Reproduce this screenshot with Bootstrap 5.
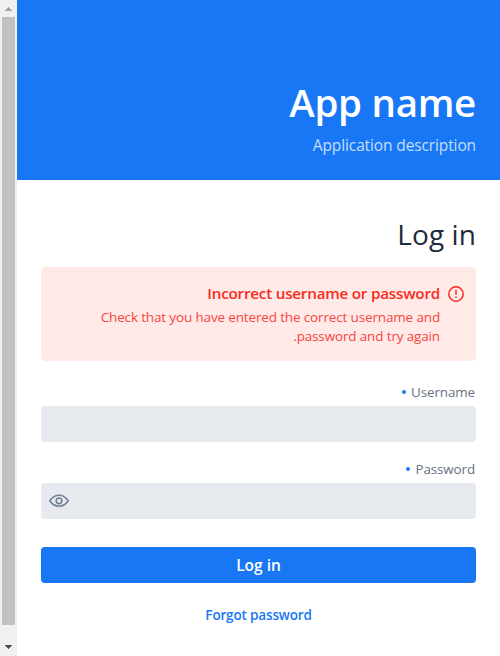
<!DOCTYPE html>
<html lang="en">
<head>
<meta charset="utf-8">
<meta name="viewport" content="width=device-width, initial-scale=1">
<title>Log in</title>
<link href="https://cdn.jsdelivr.net/npm/bootstrap@5.3.0/dist/css/bootstrap.min.css" rel="stylesheet">
<style>
body{font-family:"Segoe UI","Open Sans","Noto Sans",sans-serif;color:#1f2b3a}
.scroll-track{width:17px;background:#f0f0f0}
.scroll-thumb{width:13px;background:#c1c1c1;margin-bottom:14px}
.scroll-arrow{height:17px}
.hero{height:180px;background:#1877f5;padding:0 24px 24px}
.hero-title{font-size:38.5px;line-height:52px;font-weight:650;letter-spacing:-.3px}
.hero-text{font-size:15.5px;line-height:22px;margin-top:6px;color:#c6defd;letter-spacing:-.12px}
.login-area{padding:36px 24px 0}
.login-title{font-size:28px;line-height:36px;font-weight:400;margin-bottom:15px;letter-spacing:.1px}
.notice{background:#ffeae8;border-radius:4px;height:94px;padding:15px 12px 0;margin-bottom:21px;gap:8px}
.notice svg{margin-top:4px}
.notice-title{color:#f82a20;font-size:15.2px;line-height:22px;font-weight:600;letter-spacing:-.21px}
.notice-text{color:#f9453e;font-size:13.5px;line-height:19px;margin-top:4px;letter-spacing:-.15px}
.field-label{color:#66717f;font-size:13.4px;line-height:20px;font-weight:500;margin-bottom:4px;padding-right:1px;display:flex;align-items:center;gap:5px;letter-spacing:-.1px}
.required-dot{width:4px;height:4px;border-radius:50%;background:#1877f5}
.field-input,.field-input:focus{background:#e6e9ee;border:0;border-radius:4px;height:36px}
.field-gap{margin-bottom:17px}
.eye{left:8px;top:8px}
.submit{height:36px;border:0;border-radius:4px;background:#1877f5;font-size:15.5px;line-height:22px;font-weight:650;margin-top:28px}
.forgot{color:#1877f5;font-size:13.5px;line-height:20px;font-weight:600;margin-top:22px;letter-spacing:-.16px}
</style>
<script src="https://cdn.jsdelivr.net/npm/bootstrap@5.3.0/dist/js/bootstrap.bundle.min.js"></script>
</head>
<body class="d-flex vh-100 overflow-hidden bg-white">
<aside class="scroll-track d-flex flex-column align-items-center flex-shrink-0 h-100" aria-hidden="true">
<svg class="scroll-arrow flex-shrink-0" width="17" height="17" shape-rendering="crispEdges" fill="#a3a3a3"><path d="M8 7h1v1h1v1h1v1h1v1H5v-1h1V9h1V8h1z"/></svg>
<div class="scroll-thumb flex-grow-1"></div>
<svg class="scroll-arrow flex-shrink-0" width="17" height="17" shape-rendering="crispEdges" fill="#505050"><path d="M5 6h7v1h-1v1h-1v1H9v1H8V9H7V8H6V7H5z"/></svg>
</aside>
<main class="flex-grow-1" dir="rtl">
<header class="hero d-flex flex-column justify-content-end">
<h1 class="hero-title text-white mb-0"><span>App name</span></h1>
<p class="hero-text mb-0"><span>Application description</span></p>
</header>
<section class="login-area">
<h2 class="login-title"><span>Log in</span></h2>
<div class="notice d-flex align-items-start" role="alert">
<svg class="flex-shrink-0" width="16" height="16" viewBox="0 0 16 16" fill="none" stroke="#f82a20" stroke-width="1.5"><circle cx="8" cy="8" r="7.2"/><path d="M8 3.8v5M8 10.4v1.6"/></svg>
<div><div class="notice-title">Incorrect username or password</div>
<div class="notice-text">Check that you have entered the correct username and<br>password and try again.</div></div>
</div>
<form>
<label class="field-label" for="user"><span>Username</span><i class="required-dot"></i></label>
<input class="form-control field-input field-gap" id="user" type="text">
<label class="field-label" for="pass"><span>Password</span><i class="required-dot"></i></label>
<div class="position-relative"><input class="form-control field-input" id="pass" type="password">
<svg class="eye position-absolute" width="20" height="20" viewBox="0 0 20 20" fill="none" stroke="#738294" stroke-width="1.6"><path d="M.8 9.800C3.200 6.200 6.300 4.300 10 4.300s6.800 1.900 9.200 5.500c-2.400 3.600-5.500 5.500-9.200 5.500S3.200 13.400.8 9.800z"/><circle cx="10" cy="9.800" r="2.800"/></svg></div>
<button class="btn btn-primary submit w-100 d-flex align-items-center justify-content-center" type="button"><span>Log in</span></button>
<div class="text-center forgot"><span>Forgot password</span></div>
</form>
</section>
</main>
</body>
</html>
